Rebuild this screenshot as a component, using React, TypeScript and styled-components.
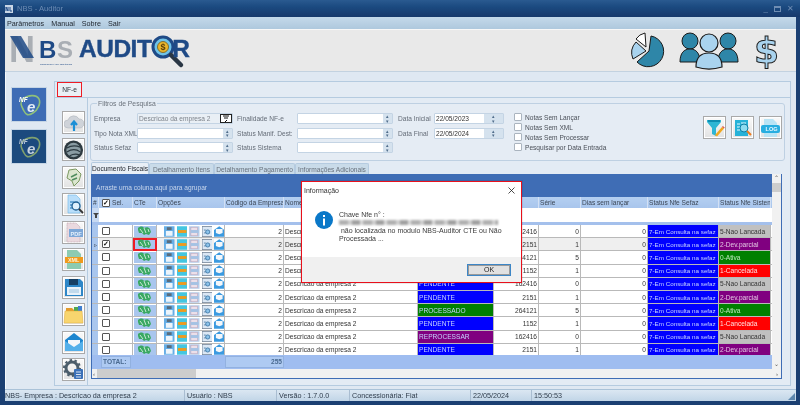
import React from "react";
import styled, { createGlobalStyle, css } from "styled-components";

const Global = createGlobalStyle`
  html, body { margin: 0; padding: 0; width: 800px; height: 405px; overflow: hidden; background: #1b3f72; }
  * { box-sizing: border-box; }
  body { font-family: "Liberation Sans", Arial, sans-serif; font-size: 6.6px; color: #3a3f47; }
`;

const Window = styled.div`
  position: relative; width: 800px; height: 405px; display: flex; flex-direction: column;
  background: #1b3f72; filter: blur(0.2px);
`;
const TitleBar = styled.div`
  height: 17px; flex: none; display: flex; align-items: center; padding: 0 6px 0 5px; gap: 4px;
  background: linear-gradient(#2a5a90, #1b4a80 40%, #17396c);
  color: #6d8cb3; font-size: 7.6px;
`;
const TitleText = styled.span` flex: 1; `;
const WinBtns = styled.div` display: flex; align-items: center; gap: 6px; color: #6f8db3; font-size: 8px; `;
const WinBox = styled.span` width: 7px; height: 6px; border: 1px solid #6f8db3; border-top-width: 2px; `;
const Inner = styled.div` flex: 1; display: flex; flex-direction: column; margin: 0 4px 0 5px; min-height: 0; `;
const MenuBar = styled.div`
  height: 12px; flex: none; display: flex; align-items: center; gap: 7px; padding-left: 2px;
  background: linear-gradient(#c4d9ea, #aec8dd); color: #232a33; font-size: 7.2px;
`;
const Header = styled.div`
  height: 43px; flex: none; display: flex; align-items: center; padding-left: 3px;
  background: #e9e9e9; border-top: 1px solid #f7f7f7; border-bottom: 1px solid #c3d2e0;
`;
const Brand = styled.div` flex: 1; display: flex; align-items: center; `;
const BrandWord = styled.span<{ $overlap?: number; $lead?: number }>`
  font-family: "Liberation Sans", Arial, sans-serif; font-weight: 700; font-size: 24.5px; line-height: 26px;
  color: #1f4a86; letter-spacing: -0.5px; margin-top: -3px; -webkit-text-stroke: 0.4px #1f4a86;
  margin-left: ${p => p.$lead ?? 0}px;
  ${p => p.$overlap && css` margin-left: -${p.$overlap}px; `}
`;
const HeaderIcons = styled.div` display: flex; align-items: center; margin-right: 17px; `;
const Workspace = styled.div`
  flex: 1; display: flex; min-height: 0; background: #dfe8f2; border-left: 1px solid #f4f8fb;
  padding: 9px 5px 3px 0;
`;
const SideRail = styled.div` width: 48px; flex: none; display: flex; flex-direction: column; gap: 7px; padding: 6px 0 0 5px; `;
const SideTile = styled.div<{ $bg: string }>`
  width: 36px; height: 35px; background: ${p => p.$bg}; display: flex; align-items: center; justify-content: center;
  border: 1px solid #c5d5e5;
`;
const MainPanel = styled.div`
  flex: 1; min-width: 0; display: flex; flex-direction: column; border: 1px solid #b5cbe0; background: #e3ebf4;
`;
const PanelTabs = styled.div` height: 16px; flex: none; padding: 0 0 0 2px; border-bottom: 1px solid #b5cbe0; `;
const NfeTab = styled.div`
  width: 25px; height: 15px; border: 1px solid #ee1c25; display: flex; align-items: center; justify-content: center;
  font-size: 6.6px; color: #2c3138; background: #eaf0f6;
`;
const PanelBody = styled.div` flex: 1; display: flex; min-height: 0; `;
const ToolColumn = styled.div`
  width: 33px; flex: none; display: flex; flex-direction: column; justify-content: space-between; padding: 13px 0 4px 7px;
  border-right: 1px solid #b5cbe0;
`;
const ToolBtn = styled.div`
  width: 23px; height: 23px; display: flex; align-items: center; justify-content: center;
  background: linear-gradient(#fafafa, #e2e2e2); border: 1px solid #a9a9a9; box-shadow: inset 0 0 0 1px #fff;
`;
const Content = styled.div` flex: 1; min-width: 0; display: flex; flex-direction: column; padding: 2px 5px 0 2px; `;
const FilterGroup = styled.fieldset`
  height: 61px; flex: none; margin: 0 0 1px; padding: 0 0 0 3px; min-width: 0; display: flex;
  border: 1px solid #bed0e2; border-radius: 3px; background: #e5ecf4;
`;
const FilterLegend = styled.legend` padding: 0 1px; margin-left: 3px; font-size: 6.8px; color: #6a727c; line-height: 7px; `;
const FilterRow = styled.div` display: flex; width: 100%; padding-top: 6px; `;
const FilterGrid = styled.div`
  display: grid; grid-template-columns: 43px 96px 64px 96px 41px 70px; grid-auto-rows: 11px; row-gap: 3.5px; align-items: center;
`;
const FieldLabel = styled.label<{ $pad?: number }>` color: #646c77; font-size: 6.6px; padding-left: ${p => p.$pad ?? 0}px; white-space: nowrap; `;
const Field = styled.div<{ $muted?: boolean }>`
  height: 11px; display: flex; align-items: stretch; background: #fff; border: 1px solid #c4d4e4; border-radius: 1px;
  font-size: 6.6px; color: ${p => (p.$muted ? "#7d838b" : "#333")}; line-height: 9px;
  ${p => p.$muted && css` background: #e9eff5; `}
`;
const FieldText = styled.span` flex: 1; padding-left: 1px; overflow: hidden; white-space: nowrap; `;
const Spinner = styled.span<{ $wide?: boolean }>`
  width: ${p => (p.$wide ? 19 : 9)}px; background: #d5e2ee; color: #4f6c8a; font-size: 5px; line-height: 4.5px;
  display: flex; flex-direction: column; align-items: center; justify-content: center;
`;
const PickerBtn = styled.span`
  width: 12px; background: #fff; border: 1px solid #222; display: flex; align-items: center; justify-content: center;
`;
const CheckList = styled.div` display: flex; flex-direction: column; gap: 2px; margin-left: 10px; width: 189px; `;
const CheckRow = styled.div` display: flex; align-items: center; gap: 3px; height: 8px; color: #4a4f58; font-size: 6.6px; `;
const Box = styled.span<{ $dark?: boolean }>`
  width: 8px; height: 8px; flex: none; background: #fff; border: 1px solid ${p => (p.$dark ? "#555" : "#aab4bf")}; border-radius: 1px;
  display: flex; align-items: center; justify-content: center; font-size: 7px; line-height: 6px; color: #111; font-weight: 700;
`;
const ActionGroup = styled.div` display: flex; gap: 5px; padding-top: 3px; `;

const TabStrip = styled.div` height: 12px; flex: none; display: flex; align-items: flex-end; padding-left: 1px; `;
const TabItem = styled.div<{ $w: number; $active?: boolean }>`
  width: ${p => p.$w}px; height: ${p => (p.$active ? 12 : 11)}px; display: flex; align-items: center; justify-content: center;
  font-size: 6.6px; white-space: nowrap; color: ${p => (p.$active ? "#22272e" : "#68717c")};
  background: ${p => (p.$active ? "#e9eff6" : "#c9dbe9")}; border: 1px solid #b5cbe0; border-bottom: 0; border-radius: 2px 2px 0 0;
`;
const GridFrame = styled.div` flex: 1; min-height: 0; display: flex; flex-direction: column; margin: 0 3px 6px 1px; border: 1px solid #3f6db5; border-top: 0; background: #fff; `;
const GridTop = styled.div` flex: 1; min-height: 0; display: flex; `;
const GridMain = styled.div` flex: 1; min-width: 0; display: flex; flex-direction: column; `;
const GroupBanner = styled.div`
  height: 23px; flex: none; background: #3f6db5; color: #c7d6ec; font-size: 6.6px; display: flex; align-items: center; padding: 3px 0 0 4px;
`;
const columns = css` display: grid; grid-template-columns: 7px 34px 24px 68px 59px 134px 76px 45px 42px 67px 71px 52px; `;
const HeadRow = styled.div`
  ${columns} height: 11px; flex: none; background: linear-gradient(#b4cff1, #a8c5ec); color: #3b4656; font-size: 6.6px;
`;
const HeadCell = styled.div<{ $pad?: number }>`
  display: flex; align-items: center; gap: 2px; padding-left: ${p => p.$pad ?? 1}px; white-space: nowrap; overflow: hidden; border-right: 1px solid #d2e0f4;
`;
const FilterBar = styled.div` ${columns} height: 17px; flex: none; background: #fff; border-bottom: 3px solid #a4c0ec; `;
const FilterMark = styled.div` background: #c7d9f2; display: flex; align-items: center; justify-content: center; `;
const Rows = styled.div` height: 129.500px; flex: none; overflow: hidden; `;
const Row = styled.div<{ $selected?: boolean }>`
  ${columns} height: 13.2px; background: ${p => (p.$selected ? "#efefef" : "#fff")}; border-bottom: 1px solid #b9b9b9;
`;
const Indicator = styled.div` background: #a9c6ee; color: #3b4656; font-size: 6px; display: flex; align-items: center; justify-content: center; border-right: 1px solid #fff; `;
const Cell = styled.div<{ $right?: boolean; $bg?: string; $fg?: string; $tight?: boolean }>`
  display: flex; align-items: center; overflow: hidden; white-space: nowrap; padding: 0 1px; font-size: ${p => (p.$tight ? 6.25 : 6.6)}px;
  justify-content: ${p => (p.$right ? "flex-end" : "flex-start")}; border-right: 1px solid #b9b9b9;
  color: ${p => p.$fg ?? "#333"}; ${p => p.$bg && css` background: ${p.$bg}; `}
`;
const SelCell = styled(Cell)` padding-left: 3px; `;
const CenterCell = styled(Cell)` justify-content: center; padding: 0; overflow: visible; `;
const CteChip = styled.div<{ $marked?: boolean }>`
  width: 22px; height: 11px; background: #a9c6ee; display: flex; align-items: center; justify-content: center;
  ${p => p.$marked && css` box-shadow: 0 0 0 1px #ee1c25, inset 0 0 0 1px #ee1c25; `}
`;
const OptionSet = styled.div` display: flex; gap: 2px; padding-left: 6px; `;
const FootRow = styled.div`
  ${columns} height: 14px; flex: none; background: #9fbdf0; padding: 1px 0;
`;
const FootBox = styled.div<{ $right?: boolean; $inset?: boolean }>`
  background: #aecaf2; border: 1px solid #92b1e0; color: #4a6a90; font-weight: 700; font-size: 6.6px; display: flex; align-items: center; padding: 0 1px;
  justify-content: ${p => (p.$right ? "flex-end" : "flex-start")};
  ${p => p.$inset && css` margin: 0 2px; `}
`;
const FootPlain = styled.div``;
const VScroll = styled.div`
  width: 9px; flex: none; background: #f1f1f1; display: flex; flex-direction: column; align-items: center; color: #555; font-size: 6px;
`;
const ScrollArrow = styled.span` height: 9px; line-height: 9px; `;
const ScrollThumb = styled.span` width: 100%; height: 9px; background: #cdcdcd; `;
const ScrollFill = styled.span` flex: 1; `;
const HScroll = styled.div` height: 9px; flex: none; display: flex; align-items: center; background: #f1f1f1; color: #555; font-size: 6px; padding: 0 3px 0 1px; `;
const HThumb = styled.span` width: 99px; height: 9px; background: #cdcdcd; margin-left: 2px; `;

const StatusBar = styled.div`
  height: 12px; flex: none; display: flex; align-items: center; background: linear-gradient(#dbe7f2, #c1d5e7); color: #2f3c4b; font-size: 7.2px;
  border-top: 1px solid #aac2d8;
`;
const StatusCell = styled.div<{ $w: number }>`
  width: ${p => p.$w}px; flex: none; white-space: nowrap; overflow: hidden; border-right: 1px solid #a9bdd1; margin-right: 2px; height: 11px; line-height: 11px;
`;
const StatusLast = styled.div` flex: 1; line-height: 11px; `;
const Grip = styled.div` margin-right: 1px; margin-top: 4px; `;
const BottomEdge = styled.div` height: 4px; flex: none; background: #1b3f72; `;

const Dialog = styled.div`
  position: absolute; left: 301px; top: 181px; width: 221px; height: 102px; background: #fff; border: 1px solid #e8101c;
  display: flex; flex-direction: column; box-shadow: 0 0 0 1px rgba(0,0,0,.08); font-size: 7px; color: #3a3a3a;
`;
const DialogTitle = styled.div` height: 15px; flex: none; display: flex; align-items: center; justify-content: space-between; padding: 1px 6px 0 2px; font-size: 7px; color: #333; `;
const DialogBody = styled.div` flex: 1; display: flex; padding: 13px 0 0 13px; gap: 6px; `;
const DialogIcon = styled.div` flex: none; padding-top: 1px; `;
const DialogText = styled.div` line-height: 8.2px; color: #3a3a3a; padding-top: 1px; `;
const Blurred = styled.div`
  width: 159px; height: 5px; margin: 1px 0 2px; filter: blur(1px);
  background: repeating-linear-gradient(90deg, #b0b0b0 0 9px, #cfcfcf 9px 13px, #a0a0a0 13px 21px, #dcdcdc 21px 24px);
`;
const DialogFoot = styled.div` height: 25px; flex: none; background: #f0f0f0; display: flex; align-items: center; justify-content: flex-end; padding: 0 10px 0 0; `;
const OkButton = styled.button`
  width: 44px; height: 12px; padding: 0; background: #e1e1e1; border: 1px solid #3d86c6; box-shadow: inset 0 0 0 1px #9a9a9a; font: inherit; font-size: 7px; color: #222;
  display: flex; align-items: center; justify-content: center;
`;

const CloudIcon = () => (
  <svg width="20" height="20" viewBox="0 0 20 20"><path d="M4 15a4 4 0 0 1 0-8 6 6 0 0 1 11-1 4.500 4.500 0 0 1 1 9z" fill="#cfd3d9" stroke="#aab0b8" strokeWidth=".5" /><path d="M10 18V10M7 12l3-3.500 3 3.500" stroke="#1c8fd6" strokeWidth="2.2" fill="none" /></svg>
);
const GlobeIcon = () => (
  <svg width="22" height="22" viewBox="0 0 22 22"><circle cx="11" cy="11" r="10" fill="#2e3a40" /><circle cx="11" cy="11" r="7.500" fill="#8a9ca3" /><path d="M4 9c5-3 9-3 14-1M4 13c5-3 10-3 14 0M7 17c4-2 7-2 10-1" stroke="#2b3940" strokeWidth="1.2" fill="none" /></svg>
);
const MapIcon = () => (
  <svg width="20" height="20" viewBox="0 0 20 20"><path d="M5 3l7-1 5 5-2 7-5 5-2-5-5-3 1-4z" fill="#dbe6cf" stroke="#7d9a63" strokeWidth="1" /><path d="M7 10l6-3M8 13l5-2" stroke="#4f8c5d" strokeWidth="1.4" /></svg>
);
const DocSearchIcon = () => (
  <svg width="20" height="21" viewBox="0 0 20 21"><path d="M4 1h8l4 4v14H4z" fill="#b9defa" stroke="#6db7ea" strokeWidth=".6" /><path d="M6 8h4M6 11h3M6 14h4" stroke="#1f74b5" strokeWidth="1.2" /><circle cx="12" cy="12" r="4" fill="#dff1fd" stroke="#1d5f93" strokeWidth="1.3" /><path d="M15 15l4 4" stroke="#333" strokeWidth="1.8" /></svg>
);
const PdfIcon = () => (
  <svg width="20" height="21" viewBox="0 0 20 21"><path d="M3 1h9l4 4v15H3z" fill="#ead9df" stroke="#b99aa6" strokeWidth=".6" strokeDasharray="1 .5" /><rect x="5" y="7" width="14" height="8" fill="#7da8d8" /><text x="6.500" y="13.500" fontSize="5.6" fontFamily="Liberation Sans" fontWeight="700" fill="#e3eefa">PDF</text></svg>
);
const XmlIcon = () => (
  <svg width="20" height="21" viewBox="0 0 20 21"><path d="M3 1h10l4 4v15H3z" fill="#8ccbb1" /><rect x="1" y="8" width="18" height="6" fill="#ef9a1d" /><text x="4" y="13" fontSize="5.4" fontFamily="Liberation Sans" fontWeight="700" fill="#fff5d8">XML</text></svg>
);
const FloppyIcon = () => (
  <svg width="20" height="20" viewBox="0 0 20 20"><path d="M1 2h15l3 3v14H1z" fill="#2d86c7" /><rect x="5" y="2" width="9" height="6" fill="#153e63" /><rect x="3" y="10" width="14" height="8" fill="#e8f2fa" /><path d="M5 13h10M5 15h10" stroke="#9cc2de" /></svg>
);
const FolderIcon = () => (
  <svg width="21" height="20" viewBox="0 0 21 20"><path d="M3 3h6l2 2h7v4H3z" fill="#e29a2b" /><path d="M11 2h5v4h-5z" fill="#4fa84f" /><path d="M15 1h4v5h-4z" fill="#3f7fd0" /><path d="M2 6h17l1 12H1z" fill="#f8d56e" stroke="#e2ac3d" strokeWidth=".5" /></svg>
);
const MailIcon = () => (
  <svg width="20" height="20" viewBox="0 0 20 20"><path d="M1 8l9-7 9 7v11H1z" fill="#1d86cf" /><path d="M4 8h12v5l-6 3-6-3z" fill="#f4f7fa" /><path d="M1 9l9 6 9-6v10H1z" fill="#54b0ea" /></svg>
);
const GearIcon = () => (
  <svg width="21" height="21" viewBox="0 0 21 21"><circle cx="9" cy="9" r="6" fill="none" stroke="#4b5d6b" strokeWidth="3" /><circle cx="9" cy="9" r="8" fill="none" stroke="#4b5d6b" strokeWidth="2" strokeDasharray="2.500 2.500" /><rect x="11" y="10" width="9" height="10" rx="1" fill="#3a70b8" /><path d="M13 13h5M13 15.500h5M13 18h5" stroke="#fff" strokeWidth=".8" /></svg>
);
const FunnelIcon = () => (
  <svg width="20" height="20" viewBox="0 0 20 20"><path d="M2 2h14v2l-5 6v8l-4-2v-6L2 4z" fill="#2fb6d4" /><path d="M3 2h12v2H3z" fill="#0f8db0" /><path d="M10 17l7-8 2 1.500-7 8z" fill="#f1a81f" /><path d="M17 9l2 1.500.8-1-2-1.500z" fill="#e0584f" /></svg>
);
const ReportIcon = () => (
  <svg width="20" height="20" viewBox="0 0 20 20"><path d="M2 2h13v16H2z" fill="#27b2d8" /><path d="M4 6h3M4 9h3M4 12h3M8 5h5" stroke="#e6f8fd" strokeWidth="1.1" /><circle cx="11" cy="10" r="4" fill="#8fdcf0" stroke="#0f7ea5" /><path d="M14 13l4 4" stroke="#ee7d1f" strokeWidth="2" /></svg>
);
const LogIcon = () => (
  <svg width="21" height="20" viewBox="0 0 21 20"><path d="M4 1h9l4 4v14H4z" fill="#b9e4f5" /><rect x="1" y="7" width="19" height="8" rx="2" fill="#28aee0" /><text x="5.500" y="13.400" fontSize="5.6" fontFamily="Liberation Sans" fontWeight="700" fill="#eaf9ff">LOG</text></svg>
);
const NfeMark = ({ dim }: { dim?: boolean }) => (
  <svg width="30" height="30" viewBox="0 0 30 30">
    <path d="M9 9c6-5 14-4 16 0s-1 11-6 14-7 2-9-2-5-8-1-12z" fill="none" stroke={dim ? "#7fa06f" : "#8fc07a"} strokeWidth="1.6" />
    <text x="5" y="12" fontSize="6.5" fontFamily="Liberation Sans" fontWeight="700" fontStyle="italic" fill={dim ? "#b8c7d8" : "#fff"}>NF</text>
    <text x="13" y="22" fontSize="15" fontFamily="Liberation Sans" fontWeight="700" fontStyle="italic" fill={dim ? "#c6d2df" : "#e4edf7"}>e</text>
  </svg>
);
const NbsLogo = () => (
  <svg width="66" height="34" viewBox="0 0 66 34">
    <text x="1" y="28" fontSize="36" fontFamily="Liberation Sans" fontWeight="700" fill="#a9aeb4">N</text>
    <path d="M2 2h11l13 22H15z" fill="#1f4a86" opacity=".85" />
    <text x="31" y="24" fontSize="24" fontFamily="Liberation Sans" fontWeight="700" fill="#1f4a86">B</text>
    <text x="49" y="24" fontSize="24" fontFamily="Liberation Sans" fontWeight="700" fill="#a9aeb4">S</text>
    <text x="32" y="31" fontSize="2.300" fontFamily="Liberation Sans" fill="#1f4a86">TECNOLOGIA EM NEGÓCIOS</text>
  </svg>
);
const Magnifier = () => (
  <svg width="34" height="36" viewBox="0 0 34 36">
    <circle cx="12" cy="14" r="10" fill="#6fc3e8" stroke="#1f4a86" strokeWidth="3" />
    <circle cx="12" cy="14" r="5.500" fill="#e8b52c" stroke="#7a5a12" strokeWidth=".8" />
    <text x="9.600" y="17.400" fontSize="9" fontFamily="Liberation Sans" fontWeight="700" fill="#5c3f08">$</text>
    <path d="M20 22l10 10" stroke="#2a3644" strokeWidth="4.500" strokeLinecap="round" />
  </svg>
);
const PieIcon = () => (
  <svg width="37" height="37" viewBox="0 0 37 37">
    <path d="M21 19L23 4A15.500 15.500 0 1 1 9 30Z" fill="#2e86a8" stroke="#1a1a1a" strokeWidth="1" />
    <path d="M18 19L8 10A16 16 0 0 0 5 27Z" fill="#a9d3ee" stroke="#1a1a1a" strokeWidth="1" />
    <path d="M18 15L8 7A14 14 0 0 1 17 1Z" fill="#fff" stroke="#1a1a1a" strokeWidth="1" />
  </svg>
);
const PeopleIcon = () => (
  <svg width="60" height="38" viewBox="0 0 60 38">
    <g fill="#2e86a8" stroke="#1a1a1a" strokeWidth="1">
      <circle cx="11" cy="9" r="8" /><path d="M1 30c0-9 4-13 10-13s10 4 10 13z" />
      <circle cx="49" cy="9" r="8" /><path d="M39 30c0-9 4-13 10-13s10 4 10 13z" />
    </g>
    <g fill="#a9d3ee" stroke="#1a1a1a" strokeWidth="1.2">
      <circle cx="30" cy="11" r="9" /><path d="M17 35c0-10 5-14 13-14s13 4 13 14c-8 2.500-18 2.500-26 0z" />
    </g>
  </svg>
);
const DollarText = styled.span`
  font-family: "DejaVu Sans", sans-serif; font-weight: 700; font-size: 36px; line-height: 38px; color: #a9d3ee;
  -webkit-text-stroke: 1px #1a1a1a; margin-left: 15px;
`;
const HeaderGap = styled.span<{ $w: number }>` width: ${p => p.$w}px; `;

const IcoFrame = styled.svg` flex: none; `;
const OptSave = () => (<IcoFrame width="10.500" height="11" viewBox="0 0 11 11"><rect width="11" height="11" fill="#66aee6" /><rect x="3" y="1" width="5" height="3" fill="#5a6c7c" /><rect x="2" y="5" width="7" height="5" fill="#eef5fb" /></IcoFrame>);
const OptBar = () => (<IcoFrame width="10.500" height="11" viewBox="0 0 11 11"><rect width="11" height="11" fill="#45c6e0" /><rect x="1" y="4" width="9" height="3" fill="#ef9a1d" /></IcoFrame>);
const OptPdf = () => (<IcoFrame width="10.500" height="11" viewBox="0 0 11 11"><rect width="11" height="11" fill="#b7cdea" /><rect x="2" y="1" width="7" height="9" fill="#ecdfe9" stroke="#b49ab0" strokeWidth=".5" /><rect x="2" y="4" width="8" height="3" fill="#a4c2e4" /></IcoFrame>);
const OptDoc = () => (<IcoFrame width="10.500" height="11" viewBox="0 0 11 11"><rect width="11" height="11" fill="#dbe7f4" stroke="#6d7d90" strokeWidth="1" /><circle cx="6" cy="6" r="2.200" fill="#8cc3ea" stroke="#1e5d92" strokeWidth=".7" /><path d="M2 4h2M2 7h2" stroke="#1e5d92" strokeWidth=".7" /></IcoFrame>);
const OptMail = () => (<IcoFrame width="10.500" height="11" viewBox="0 0 11 11"><rect width="11" height="11" fill="#fff" /><path d="M0 4l5.500-4L11 4v7H0z" fill="#3b9ae0" /><path d="M2 3h7v4l-3.500 1.500L2 7z" fill="#f4f7fa" /></IcoFrame>);
const CteIcon = () => (
  <svg width="17" height="10" viewBox="0 0 17 10"><path d="M2 2c2-2 5-2 6 0 2-1 5-1 6 1l1 3-2 3-3-1-2 1-2-2-3 0-1-3z" fill="#3aa863" /><path d="M4 3l3 4M8 2l2 5M12 3l1 3" stroke="#d7f1df" strokeWidth=".9" /></svg>
);

type RowData = { status: string; statusBg: string; num: string; serie: string; sis: string; sisBg: string; sisFg: string };
const pattern: RowData[] = [
  { status: "PENDENTE", statusBg: "#0000ff", num: "162416", serie: "0", sis: "5-Nao Lancada", sisBg: "#c0c0c0", sisFg: "#333" },
  { status: "PENDENTE", statusBg: "#0000ff", num: "2151", serie: "1", sis: "2-Dev.parcial", sisBg: "#800080", sisFg: "#e2c4e2" },
  { status: "PROCESSADO", statusBg: "#008000", num: "264121", serie: "5", sis: "0-Ativa", sisBg: "#008000", sisFg: "#bfe8bf" },
  { status: "PENDENTE", statusBg: "#0000ff", num: "1152", serie: "1", sis: "1-Cancelada", sisBg: "#ff0000", sisFg: "#ffe0e0" },
];
const rows: RowData[] = [...pattern, ...pattern, { ...pattern[0], status: "REPROCESSAR", statusBg: "#800080" }, pattern[1]];
const heads = ["CTe", "Opções", "Código da Empresa", "Nome", "Status", "Nº", "Série", "Dias sem lançar", "Status Nfe Sefaz", "Status Nfe Sistema"];

export default function App() {
  return (
    <Window>
      <Global />
      <TitleBar>
        <svg width="8" height="8" viewBox="0 0 8 8"><rect width="8" height="8" fill="#c9d6e6" /><path d="M1 6V2l2 4V2M5 2v4h2" stroke="#1f4a86" fill="none" /></svg>
        <TitleText>NBS - Auditor</TitleText>
        <WinBtns><span>_</span><WinBox /><span>✕</span></WinBtns>
      </TitleBar>
      <Inner>
        <MenuBar><span>Parâmetros</span><span>Manual</span><span>Sobre</span><span>Sair</span></MenuBar>
        <Header>
          <Brand>
            <NbsLogo />
            <BrandWord $lead={5}>AUDIT</BrandWord>
            <Magnifier />
            <BrandWord $overlap={13}>R</BrandWord>
          </Brand>
          <HeaderIcons>
            <PieIcon /><HeaderGap $w={14} /><PeopleIcon /><DollarText>$</DollarText>
          </HeaderIcons>
        </Header>
        <Workspace>
          <SideRail>
            <SideTile $bg="#3e6cb5"><NfeMark /></SideTile>
            <SideTile $bg="#1c4a7e"><NfeMark dim /></SideTile>
          </SideRail>
          <MainPanel>
            <PanelTabs><NfeTab>NF-e</NfeTab></PanelTabs>
            <PanelBody>
              <ToolColumn>
                <ToolBtn><CloudIcon /></ToolBtn>
                <ToolBtn><GlobeIcon /></ToolBtn>
                <ToolBtn><MapIcon /></ToolBtn>
                <ToolBtn><DocSearchIcon /></ToolBtn>
                <ToolBtn><PdfIcon /></ToolBtn>
                <ToolBtn><XmlIcon /></ToolBtn>
                <ToolBtn><FloppyIcon /></ToolBtn>
                <ToolBtn><FolderIcon /></ToolBtn>
                <ToolBtn><MailIcon /></ToolBtn>
                <ToolBtn><GearIcon /></ToolBtn>
              </ToolColumn>
              <Content>
                <FilterGroup>
                  <FilterLegend>Filtros de Pesquisa</FilterLegend>
                  <FilterRow>
                    <FilterGrid>
                      <FieldLabel>Empresa</FieldLabel>
                      <Field $muted><FieldText>Descricao da empresa 2</FieldText><PickerBtn><svg width="8" height="8" viewBox="0 0 8 8"><path d="M1 1h6M2 3h4M5 5L3 7" stroke="#111" strokeWidth="1" /></svg></PickerBtn></Field>
                      <FieldLabel $pad={4}>Finalidade NF-e</FieldLabel>
                      <Field><FieldText /><Spinner>▴<br />▾</Spinner></Field>
                      <FieldLabel $pad={5}>Data Inicial</FieldLabel>
                      <Field><FieldText>22/05/2023</FieldText><Spinner $wide>▴<br />▾</Spinner></Field>
                      <FieldLabel>Tipo Nota XML</FieldLabel>
                      <Field><FieldText /><Spinner>▴<br />▾</Spinner></Field>
                      <FieldLabel $pad={4}>Status Manif. Dest:</FieldLabel>
                      <Field><FieldText /><Spinner>▴<br />▾</Spinner></Field>
                      <FieldLabel $pad={5}>Data Final</FieldLabel>
                      <Field><FieldText>22/05/2024</FieldText><Spinner $wide>▴<br />▾</Spinner></Field>
                      <FieldLabel>Status Sefaz</FieldLabel>
                      <Field><FieldText /><Spinner>▴<br />▾</Spinner></Field>
                      <FieldLabel $pad={4}>Status Sistema</FieldLabel>
                      <Field><FieldText /><Spinner>▴<br />▾</Spinner></Field>
                    </FilterGrid>
                    <CheckList>
                      <CheckRow><Box />Notas Sem Lançar</CheckRow>
                      <CheckRow><Box />Notas Sem XML</CheckRow>
                      <CheckRow><Box />Notas Sem Processar</CheckRow>
                      <CheckRow><Box />Pesquisar por Data Entrada</CheckRow>
                    </CheckList>
                    <ActionGroup>
                      <ToolBtn><FunnelIcon /></ToolBtn>
                      <ToolBtn><ReportIcon /></ToolBtn>
                      <ToolBtn><LogIcon /></ToolBtn>
                    </ActionGroup>
                  </FilterRow>
                </FilterGroup>
                <TabStrip>
                  <TabItem $w={58} $active>Documento Fiscais</TabItem>
                  <TabItem $w={65}>Detalhamento Itens</TabItem>
                  <TabItem $w={81}>Detalhamento Pagamento</TabItem>
                  <TabItem $w={74}>Informações Adicionais</TabItem>
                </TabStrip>
                <GridFrame>
                  <GridTop>
                    <GridMain>
                      <GroupBanner>Arraste uma coluna aqui para agrupar</GroupBanner>
                      <HeadRow>
                        <HeadCell>#</HeadCell>
                        <HeadCell $pad={3}><Box $dark>✓</Box>Sel.</HeadCell>
                        {heads.map(h => <HeadCell key={h}>{h}</HeadCell>)}
                      </HeadRow>
                      <FilterBar>
                        <FilterMark><svg width="6" height="6" viewBox="0 0 6 6"><path d="M0 1h6L4 3v3H2V3z" fill="#444" /></svg></FilterMark>
                      </FilterBar>
                      <Rows>
                        {rows.map((r, i) => (
                          <Row key={i} $selected={i === 1}>
                            <Indicator>{i === 1 ? "▹" : ""}</Indicator>
                            <SelCell><Box $dark>{i === 1 ? "✓" : ""}</Box></SelCell>
                            <CenterCell><CteChip $marked={i === 1}><CteIcon /></CteChip></CenterCell>
                            <Cell><OptionSet><OptSave /><OptBar /><OptPdf /><OptDoc /><OptMail /></OptionSet></Cell>
                            <Cell $right>2</Cell>
                            <Cell>Descricao da empresa 2</Cell>
                            <Cell $bg={r.statusBg} $fg="#c6d3ff">{r.status}</Cell>
                            <Cell $right>{r.num}</Cell>
                            <Cell $right>{r.serie}</Cell>
                            <Cell $right>0</Cell>
                            <Cell $bg="#0000ff" $fg="#c6d3ff" $tight>7-Em Consulta na sefaz</Cell>
                            <Cell $bg={r.sisBg} $fg={r.sisFg}>{r.sis}</Cell>
                          </Row>
                        ))}
                      </Rows>
                      <FootRow>
                        <FootPlain />
                        <FootBox $inset>TOTAL:</FootBox>
                        <FootPlain />
                        <FootPlain />
                        <FootBox $right>255</FootBox>
                      </FootRow>
                    </GridMain>
                    <VScroll>
                      <ScrollArrow>⌃</ScrollArrow>
                      <ScrollThumb />
                      <ScrollFill />
                      <ScrollArrow>⌄</ScrollArrow>
                    </VScroll>
                  </GridTop>
                  <HScroll><span>‹</span><HThumb /><ScrollFill /><span>›</span></HScroll>
                </GridFrame>
              </Content>
            </PanelBody>
          </MainPanel>
        </Workspace>
        <StatusBar>
          <StatusCell $w={180}>NBS- Empresa : Descricao da empresa 2</StatusCell>
          <StatusCell $w={90}>Usuário : NBS</StatusCell>
          <StatusCell $w={71}>Versão : 1.7.0.0</StatusCell>
          <StatusCell $w={119}>Concessionária: Fiat</StatusCell>
          <StatusCell $w={59}>22/05/2024</StatusCell>
          <StatusLast>15:50:53</StatusLast>
          <Grip><svg width="7" height="7" viewBox="0 0 7 7"><path d="M7 0v7H0z" fill="#5d86ad" /></svg></Grip>
        </StatusBar>
      </Inner>
      <BottomEdge />
      <Dialog>
        <DialogTitle><span>Informação</span><svg width="7" height="7" viewBox="0 0 7 7"><path d="M.5.500l6 6M6.500.500l-6 6" stroke="#222" strokeWidth=".8" /></svg></DialogTitle>
        <DialogBody>
          <DialogIcon><svg width="18" height="18" viewBox="0 0 18 18"><circle cx="9" cy="9" r="9" fill="#0a78c8" /><rect x="8" y="7.500" width="2" height="7" fill="#fff" /><rect x="8" y="4" width="2" height="2" fill="#fff" /></svg></DialogIcon>
          <DialogText>
            Chave Nfe n° :
            <Blurred />
            &nbsp;não localizada no modulo NBS-Auditor CTE ou Não<br />Processada ...
          </DialogText>
        </DialogBody>
        <DialogFoot><OkButton>OK</OkButton></DialogFoot>
      </Dialog>
    </Window>
  );
}
